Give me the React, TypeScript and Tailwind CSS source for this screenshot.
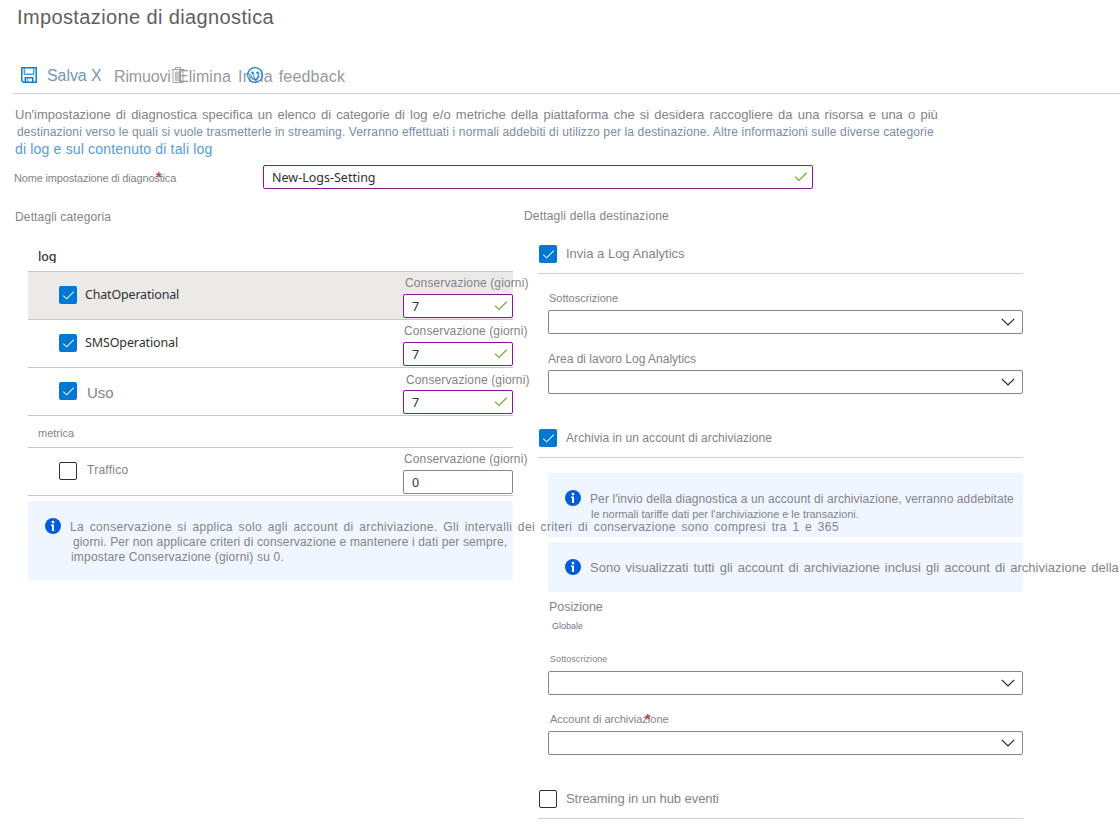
import type { ReactNode } from "react";

function Checkbox({ checked = false }: { checked?: boolean }) {
  return checked ? (
    <span className="flex h-[18px] w-[18px] shrink-0 items-center justify-center rounded-[2px] bg-[#0078d4]">
      <svg width="18" height="18" viewBox="0 0 18 18" fill="none" stroke="#e4f1fb" strokeWidth="1.1">
        <path d="M4.2 9.6 L7.7 12.8 L14.8 5.6" />
      </svg>
    </span>
  ) : (
    <span className="h-[18px] w-[18px] shrink-0 rounded-[2px] border border-[#323130] bg-white" />
  );
}

function ValidMark() {
  return (
    <svg width="14" height="10" viewBox="0 0 14 10" fill="none" stroke="#6bb02c" strokeWidth="1.2">
      <path d="M1 4.6 L4.9 8.4 L12.8 0.8" />
    </svg>
  );
}

function InfoIcon() {
  return (
    <svg className="shrink-0" width="16" height="16" viewBox="0 0 16 16">
      <circle cx="8" cy="8" r="8" fill="#015cda" />
      <circle cx="8" cy="4.1" r="1.4" fill="#fff" />
      <path d="M6 6.600h3v6.400H7V8H6z" fill="#fff" />
    </svg>
  );
}

function Select() {
  return (
    <div className="ml-6 flex h-6 w-[475px] items-center justify-end rounded-[2px] border border-[#8a8886] bg-white pr-[7px]">
      <svg width="14" height="8" viewBox="0 0 14 8" fill="none" stroke="#252423" strokeWidth="1.2">
        <path d="M0.8 0.8 L7 7 L13.2 0.8" />
      </svg>
    </div>
  );
}

function DaysInput({ value, valid = false }: { value: string; valid?: boolean }) {
  return (
    <div
      className={`flex h-6 w-[110px] items-center justify-between rounded-[2px] border bg-white pr-1 pl-2 ${
        valid ? "border-[#881798]" : "border-[#8a8886]"
      }`}
    >
      <span className="pt-[2px] font-['Noto_Sans',sans-serif] text-[12.5px] leading-4 text-[#323130]">{value}</span>
      {valid && <ValidMark />}
    </div>
  );
}

function LogRow({
  children,
  value,
  checked = false,
  highlighted = false,
  labelClass = "pt-[3px] pl-[2px]",
}: {
  children: ReactNode;
  value: string;
  checked?: boolean;
  highlighted?: boolean;
  labelClass?: string;
}) {
  return (
    <div
      className={`flex h-12 items-start justify-between border-t border-[#c8c8c8] pl-[31px] ${
        highlighted ? "bg-[#ebeae8]" : ""
      }`}
    >
      <div className="flex items-start gap-2 pt-[14px]">
        <Checkbox checked={checked} />
        {children}
      </div>
      <div className="flex h-[46px] w-[110px] flex-col justify-between">
        <span className={`text-[12px] leading-4 tracking-[0.13px] ${labelClass}`}>Conservazione (giorni)</span>
        <DaysInput value={value} valid={checked} />
      </div>
    </div>
  );
}

function Toolbar() {
  return (
    <div className="ml-[13px] flex h-[63px] items-start border-b border-[#d2d0ce] pt-[36px] pl-2 text-[16px] leading-5 text-[#9799a3]">
      <svg className="shrink-0" width="16" height="16" viewBox="0 0 16 16" fill="none" stroke="#0f7bd3" strokeWidth="1.5">
        <path d="M0.8 0.8h14.4v14.4H2.2L0.800 13.800z" />
        <path d="M3.4 1v6.200h9.200V1" stroke="#4ba0e1" />
        <path d="M4.300 15v-4.300h7.400V15" />
        <path d="M6.600 12v3" stroke="#4ba0e1" />
      </svg>
      <span className="-mt-px ml-[10px] w-[67px] tracking-[-0.08px] text-[#7795b3]">Salva X</span>
      <span className="w-[64px] tracking-[-0.165px]">Rimuovi</span>
      <span className="relative w-[60px]">
        <svg className="absolute top-0 -left-[7px]" width="14" height="17" viewBox="0 0 14 17" fill="none" stroke="#a3a2a0" strokeWidth="1">
          <path d="M0.500 2.500h13M4.500 2.500v-2h5v2M2 2.500v13h10v-13" />
          <path d="M4.500 5h5v8.500h-5z" fill="#cac8c6" stroke="#b9b7b5" />
        </svg>
        <span className="relative tracking-[0.057px]">Elimina</span>
      </span>
      <span className="relative tracking-[0.2px] [word-spacing:1.2px]">
        Invia feedback
        <svg className="absolute top-0 left-[9px]" width="16" height="16" viewBox="0 0 16 16" fill="none" stroke="#1b86dc" strokeWidth="1.2">
          <circle cx="8" cy="8" r="7.400" />
          <path d="M4 8.700c0.500 2.500 2 3.700 4 3.700s3.500-1.200 4-3.700" />
          <circle cx="5.500" cy="5.700" r="0.700" fill="#1b86dc" />
          <circle cx="10.500" cy="5.700" r="0.700" fill="#1b86dc" />
        </svg>
      </span>
    </div>
  );
}

function CategoryPanel() {
  return (
    <section className="relative z-10 w-[513px] shrink-0 pt-5">
      <h2 className="pl-[15px] text-[12px] leading-4 tracking-[0.15px]">Dettagli categoria</h2>
      <div className="pt-6 pl-7">
        <div className="h-[14px] overflow-hidden pl-[10px] font-['Noto_Sans',sans-serif] text-[12.5px] leading-4 font-medium tracking-[-0.1px] text-[#323130]">
          log
        </div>
        <div className="mt-2 border-b border-[#c8c8c8]">
          <LogRow value="7" checked highlighted>
            <span className="pt-px font-['Noto_Sans',sans-serif] text-[12.5px] leading-4 tracking-[-0.18px] text-[#323130]">
              ChatOperational
            </span>
          </LogRow>
          <LogRow value="7" checked labelClass="pt-[3px] pl-px">
            <span className="pt-px font-['Noto_Sans',sans-serif] text-[12.5px] leading-4 tracking-[-0.12px] text-[#323130]">
              SMSOperational
            </span>
          </LogRow>
          <LogRow value="7" checked labelClass="pt-1 pl-[3px]">
            <span className="pt-[3px] pl-[2px] text-[15px] leading-4 tracking-[-0.1px]">Uso</span>
          </LogRow>
          <div className="h-8 border-t border-[#c8c8c8] pt-[9px] pl-[10px] text-[11px] leading-4">metrica</div>
          <LogRow value="0" labelClass="pt-[3px] pl-px">
            <span className="pl-[2px] text-[12px] leading-4 tracking-[0.25px]">Traffico</span>
          </LogRow>
        </div>
        <div className="mt-[5px] flex h-[79px] items-start gap-[9px] rounded-[2px] bg-[#eff6ff] pt-[17px] pl-[17px]">
          <InfoIcon />
          <div className="pt-[2px] text-[12px] leading-[15px]">
            <p className="tracking-[0.35px] [word-spacing:2px]">
              La conservazione si applica solo agli account di archiviazione. Gli intervalli dei criteri di conservazione
              sono compresi tra 1 e 365
            </p>
            <p className="pl-[3px] tracking-[0.14px]">
              giorni. Per non applicare criteri di conservazione e mantenere i dati per sempre,
            </p>
            <p className="pl-px tracking-[0.181px]">impostare Conservazione (giorni) su 0.</p>
          </div>
        </div>
      </div>
    </section>
  );
}

function DestinationPanel() {
  return (
    <section className="ml-[11px] w-[499px] shrink-0 pt-[19px]">
      <h2 className="text-[12px] leading-4 tracking-[0.18px]">Dettagli della destinazione</h2>

      <div className="mt-[21px] ml-[14px] flex h-[29px] items-start gap-[9px] border-b border-[#d2d0ce] pl-px">
        <Checkbox checked />
        <span className="text-[13px] leading-[17px]">Invia a Log Analytics</span>
      </div>
      <div className="mt-4 ml-[25px] text-[11px] leading-4">Sottoscrizione</div>
      <div className="mt-1">
        <Select />
      </div>
      <div className="mt-[17px] ml-6 text-[12px] leading-4">Area di lavoro Log Analytics</div>
      <div className="mt-[3px]">
        <Select />
      </div>

      <div className="mt-[35px] ml-[14px] flex h-[29px] items-start gap-[9px] border-b border-[#d2d0ce] pl-px">
        <Checkbox checked />
        <span className="text-[12px] leading-[19px] tracking-[0.065px]">Archivia in un account di archiviazione</span>
      </div>

      <div className="mt-[15px] ml-6 flex h-16 items-start gap-[9px] rounded-[2px] bg-[#eff6ff] pt-[17px] pl-[17px]">
        <InfoIcon />
        <div className="pt-[2px] leading-[15px]">
          <p className="text-[12px] tracking-[0.1px]">
            Per l'invio della diagnostica a un account di archiviazione, verranno addebitate
          </p>
          <p className="pl-px text-[11px] tracking-[-0.032px]">
            le normali tariffe dati per l'archiviazione e le transazioni.
          </p>
        </div>
      </div>
      <div className="mt-[5px] ml-6 flex h-[50px] items-start gap-[9px] rounded-[2px] bg-[#eff6ff] pt-[17px] pl-[17px]">
        <InfoIcon />
        <p className="text-[13px] leading-[17px] [word-spacing:1.55px]">
          Sono visualizzati tutti gli account di archiviazione inclusi gli account di archiviazione della
        </p>
      </div>

      <div className="mt-[7px] ml-[25px] text-[12.5px] leading-4 tracking-[-0.05px]">Posizione</div>
      <div className="mt-[3px] ml-7 text-[9px] leading-4 text-[#77708a]">Globale</div>
      <div className="mt-[17px] ml-[26px] text-[9px] leading-4 tracking-[0.06px]">Sottoscrizione</div>
      <div className="mt-1">
        <Select />
      </div>
      <div className="mt-4 ml-[26px] text-[11px] leading-4">
        <span className="relative">
          Account di archiviazione
          <span className="absolute top-[-2px] left-[95px] text-[14px] leading-4 font-bold text-[#b84750]">*</span>
        </span>
      </div>
      <div className="mt-1">
        <Select />
      </div>

      <div className="mt-[35px] ml-[14px] flex h-[29px] items-start gap-[9px] border-b border-[#d2d0ce] pl-px">
        <Checkbox />
        <span className="text-[13px] leading-[17px] tracking-[-0.07px]">Streaming in un hub eventi</span>
      </div>
    </section>
  );
}

export default function App() {
  return (
    <main className="h-[840px] w-[1120px] overflow-hidden bg-white font-['Liberation_Sans',Arial,sans-serif] whitespace-nowrap text-[#85828a]">
      <h1 className="h-[31px] pt-[3px] pl-[17px] text-[20px] leading-7 tracking-[0.38px] text-[#5f5e60]">
        Impostazione di diagnostica
      </h1>
      <Toolbar />
      <div className="pt-3 pl-[15px]">
        <p className="text-[13px] leading-[18px] [word-spacing:1.55px]">
          Un'impostazione di diagnostica specifica un elenco di categorie di log e/o metriche della piattaforma che si
          desidera raccogliere da una risorsa e una o più
        </p>
        <p className="pl-[2px] text-[12px] leading-[17px] tracking-[0.13px] text-[#7c8ca3]">
          destinazioni verso le quali si vuole trasmetterle in streaming. Verranno effettuati i normali addebiti di
          utilizzo per la destinazione. Altre informazioni sulle diverse categorie
        </p>
        <p className="text-[14px] leading-[17px] tracking-[0.177px] text-[#559bdd]">
          di log e sul contenuto di tali log
        </p>
      </div>
      <div className="mt-[7px] flex h-6 items-center pl-[14px]">
        <div className="w-[249px] pt-[2px] text-[11px] leading-4 tracking-[-0.169px]">
          <span className="relative">
            Nome impostazione di diagnostica
            <span className="absolute top-[-3px] left-[142px] text-[14px] leading-4 font-bold text-[#b84750]">*</span>
          </span>
        </div>
        <div className="flex h-6 w-[550px] items-center justify-between rounded-[2px] border border-[#881798] bg-white pr-1 pl-2">
          <span className="pt-[2px] font-['Noto_Sans',sans-serif] text-[12.5px] leading-4 text-[#323130]">
            New-Logs-Setting
          </span>
          <ValidMark />
        </div>
      </div>
      <div className="flex items-start">
        <CategoryPanel />
        <DestinationPanel />
      </div>
    </main>
  );
}
